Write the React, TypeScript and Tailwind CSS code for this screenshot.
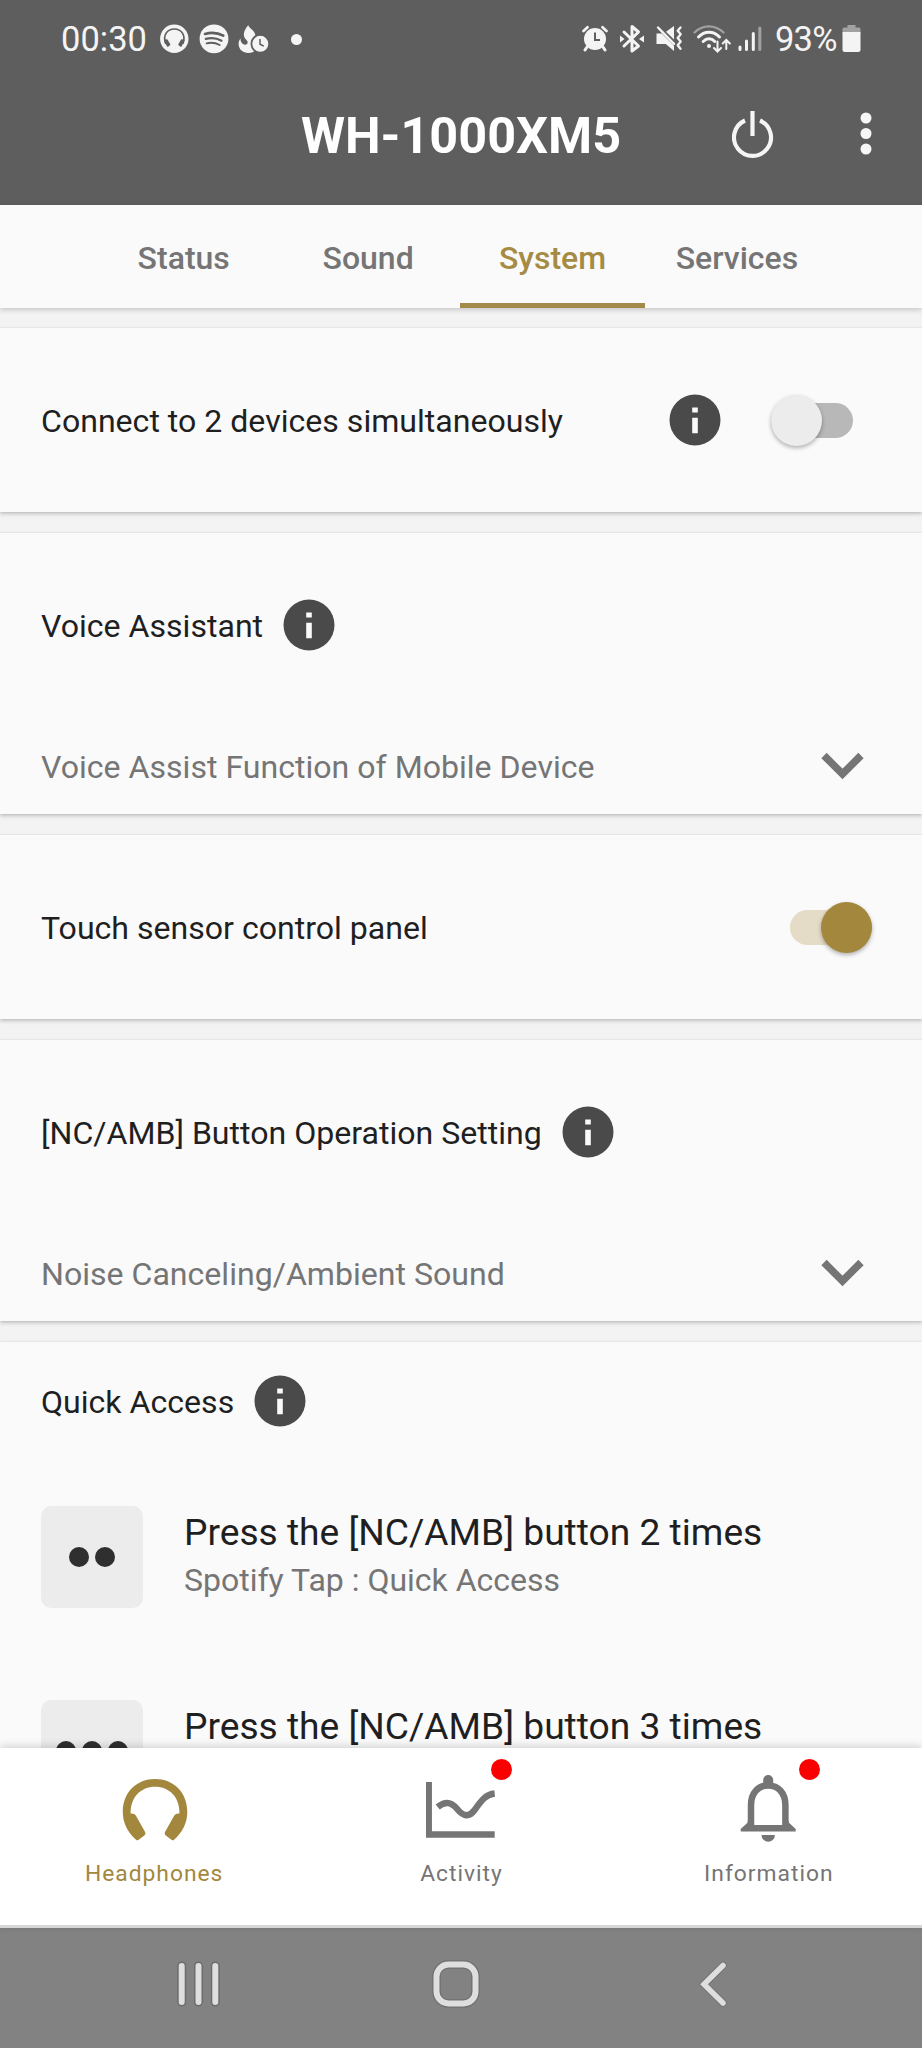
import React from 'react';
import clsx from 'clsx';

const InfoIcon = () => (
    <svg className="h-[52px] w-[52px] shrink-0" viewBox="0 0 52 52">
        <circle cx="26" cy="26" r="25.5" fill="#4a4a4a" />
        <path d="M23.2 13.4h5.6v5.2h-5.6zM23.2 23.8h5.6v15.4h-5.6z" fill="#fafafa" />
    </svg>
);

const ChevronIcon = () => (
    <svg className="h-[28px] w-[44px]" viewBox="0 0 44 28">
        <path d="M3 3.5 21.5 22 40 3.5" fill="none" stroke="#757575" strokeWidth="7.5" />
    </svg>
);

const Switch = ({ on }: { on?: boolean }) => (
    <div
        className={clsx(
            'flex h-[35px] w-[82px] items-center rounded-full',
            on ? 'justify-end bg-[#e5dcc7]' : 'justify-start bg-[#b8b8b8]'
        )}
    >
        <div
            className={clsx(
                'h-[51px] w-[51px] shrink-0 rounded-full shadow-[0_2px_4px_rgba(0,0,0,0.3)]',
                on ? 'bg-[#a3873c]' : 'bg-[#ececec]'
            )}
        />
    </div>
);

const StatusBar = () => (
    <div className="flex h-[78px] items-center pl-[61px] text-[#f4f4f4]">
        <span className="w-[98px] text-[34.5px] leading-none">00:30</span>
        {/* Headphones connect */}
        <svg className="ml-px h-[30px] w-[29px]" viewBox="0 0 29 30">
            <circle cx="14.3" cy="14.8" r="14.2" fill="currentColor" />
            <path
                d="M5.8 20C2.3 11 7.4 5 14.3 5S26.3 11 22.8 20"
                fill="none" stroke="#5e5e5e" strokeWidth="1.7"
            />
            <path
                d="m5 16.500 1.800-.5 2.700 4.500-1.900 1.500zM23.600 16.500l-1.800-.5-2.700 4.500 1.900 1.500z"
                fill="#5e5e5e" stroke="#5e5e5e" strokeWidth="1.6" strokeLinejoin="round"
            />
        </svg>
        {/* Spotify */}
        <svg className="ml-[10px] h-[30px] w-[30px]" viewBox="0 0 30 30">
            <circle cx="15" cy="14.8" r="14.4" fill="currentColor" />
            <g fill="none" stroke="#5e5e5e" strokeLinecap="round">
                <path d="M6 9.900c6.300-1.700 13-1.100 18.300 1.800" strokeWidth="2.6" />
                <path d="M6.800 14.900c5.500-1.500 11-.9 15.700 1.800" strokeWidth="2.2" />
                <path d="M7.600 19.400c4.500-1.200 9-.6 13.100 1.600" strokeWidth="1.8" />
            </g>
        </svg>
        {/* Flame with timer */}
        <svg className="ml-[9px] h-[30px] w-[32px]" viewBox="0 0 32 30">
            <path
                d="M10.300 1.300c.6 3 5.800 5 6.800 8.700.6 2.400-.3 4.400-1.900 5.900-1.700 1.700-1.300 4.600-.2 7.100l2 3.800C15 28.500 13 29 10.500 29 5 29 .6 25.200.6 20c0-2.200.7-4 1.900-5.400-.1 2.700 1 4.700 2.900 5.700 2.200 1.100 4.500-.1 4.300-2.200-.2-1.700-2.400-2.800-3.300-4.900C4.900 9.600 7.100 4.500 10.300 1.300z"
                fill="currentColor"
            />
            <circle cx="22.3" cy="19.8" r="8.9" fill="currentColor" stroke="#5e5e5e" strokeWidth="1.8" />
            <path d="M22 15v5.200l3.800 2" fill="none" stroke="#5e5e5e" strokeWidth="1.5" />
        </svg>
        <span className="ml-[21px] h-[11px] w-[11px] rounded-full bg-[#f4f4f4]" />

        <div className="ml-auto flex items-center pr-[61px]">
            {/* Alarm */}
            <svg className="h-[30px] w-[26px]" viewBox="0 0 26 30">
                <g stroke="currentColor" strokeLinecap="round">
                    <path d="m1.500 7 4-3.800M24.500 7l-4-3.800" strokeWidth="2.6" />
                    <path d="m5 23-2 3M21 23l2 3" strokeWidth="3" />
                </g>
                <circle cx="13" cy="15" r="11" fill="currentColor" />
                <path d="M13 8.500V16h5" fill="none" stroke="#5e5e5e" strokeWidth="2" />
            </svg>
            {/* Bluetooth */}
            <svg className="ml-[12px] h-[30px] w-[24px]" viewBox="0 0 24 30">
                <path
                    d="m4 8 14.500 14-6.500 5V2.500L18.500 8 4 22"
                    fill="none" stroke="currentColor" strokeWidth="3" strokeLinejoin="round" strokeLinecap="round"
                />
                <path d="M0 11.500 4.500 15 0 18.500zM24 11.500 19 15l5 3.500z" fill="currentColor" />
            </svg>
            {/* Muted, vibrate */}
            <svg className="ml-[12px] h-[30px] w-[27px]" viewBox="0 0 27 30">
                <path d="M.5 9.500h5.300L18 21.800V27l-8.200-7H.5zM10 7.700 18 2v13.500z" fill="currentColor" />
                <path d="m2 3.500 16 16.300" stroke="currentColor" strokeWidth="2.4" strokeLinecap="round" />
                <path
                    d="m24.500 3.500-2.800 3.300 3 3.500-3 3.700 3 3.500-3 3.700 2.800 3.600"
                    fill="none" stroke="currentColor" strokeWidth="2.3" strokeLinecap="round" strokeLinejoin="round"
                />
            </svg>
            {/* Wifi with data arrows */}
            <svg className="ml-[10px] h-[30px] w-[38px]" viewBox="0 0 38 30">
                <g fill="none" stroke="currentColor" strokeLinecap="round">
                    <path d="M1.500 8.500c8-8.300 20.500-8.300 29 0" strokeWidth="2.3" opacity=".45" />
                    <path d="M5.500 13c6-6.300 15-6.300 21 0" strokeWidth="3" />
                    <path d="M10.200 17.500c3.500-3.700 8.100-3.700 11.600 0" strokeWidth="3" />
                    <path d="M24.500 17.500v9.500m-3.500-3 3.500 3.600L28 24M33.300 25v-8.500m-3.500 3 3.500-3.600 3.500 3.600" strokeWidth="2" />
                </g>
                <circle cx="16" cy="22" r="2" fill="currentColor" />
            </svg>
            {/* Signal */}
            <svg className="ml-[7px] h-[30px] w-[24px]" viewBox="0 0 24 30">
                <g stroke="currentColor" strokeWidth="3" strokeLinecap="round">
                    <path d="M2 23v2.500M8.500 17v8.500M15.300 9.500v16" />
                    <path d="M21.800 4v21.500" opacity=".45" />
                </g>
            </svg>
            <span className="ml-[13px] w-[63px] text-[34.5px] leading-none tracking-[-0.8px]">93%</span>
            {/* Battery */}
            <svg className="ml-[4px] h-[30px] w-[19px]" viewBox="0 0 19 30">
                <path d="M5.500 1h8v2.500H17Q18.500 3.500 18.500 5v4H.5V5Q.5 3.500 2 3.500h3.500z" fill="currentColor" opacity=".45" />
                <path d="M.5 8h18v17.500q0 2.500-2.500 2.500H3Q.5 28 .5 25.500z" fill="currentColor" />
            </svg>
        </div>
    </div>
);

const AppBar = () => (
    <div className="grid h-[116px] grid-cols-[1fr_auto_1fr] items-center">
        <h1 className="col-start-2 pt-px text-[50.4px] leading-none font-bold text-white">WH-1000XM5</h1>
        <div className="flex items-center justify-end gap-[86px] pr-[50px]">
            <svg className="h-[50px] w-[42px]" viewBox="0 0 42 50">
                <path d="M13 9.500a18.500 18.500 0 1 0 15 0M20.500 0v25" fill="none" stroke="#f5f5f5" strokeWidth="4.2" />
            </svg>
            <svg className="h-[48px] w-[12px]" viewBox="0 0 12 48" fill="#f7f7f7">
                <circle cx="6" cy="6" r="5.5" />
                <circle cx="6" cy="21.5" r="5.5" />
                <circle cx="6" cy="37" r="5.5" />
            </svg>
        </div>
    </div>
);

const tabs = ['Status', 'Sound', 'System', 'Services'];

const TabBar = ({ active }: { active: string }) => (
    <nav className="relative z-10 flex h-[103px] shrink-0 bg-[#fafafa] pl-[91.5px] shadow-[0_2px_5px_rgba(0,0,0,0.18)]">
        {tabs.map((tab) => (
            <div
                key={tab}
                className={clsx(
                    'flex w-[184.4px] items-center justify-center border-b-[5px] pt-[7px] text-[32px] font-medium',
                    tab === active ? 'border-[#a38a48] text-[#a58b43]' : 'border-transparent text-[#757575]'
                )}
            >
                {tab}
            </div>
        ))}
    </nav>
);

const Card = ({ children }: { children: React.ReactNode }) => (
    <section className="shrink-0 bg-[#fafafa] px-[41px] text-[32.1px] text-[#1f1f1f] shadow-[0_2px_4px_rgba(0,0,0,0.2),0_0_2px_rgba(0,0,0,0.1)]">
        {children}
    </section>
);

const SelectCard = ({ title, value }: { title: string; value: string }) => (
    <Card>
        <div className="flex h-[184px] items-center gap-[20px]">
            <span className="pt-[2px]">{title}</span>
            <InfoIcon />
        </div>
        <div className="flex h-[97px] items-center justify-between pr-[16px] text-[#757575]">
            <span className="pt-[3px]">{value}</span>
            <ChevronIcon />
        </div>
    </Card>
);

const QuickAccessRow = ({ presses, value }: { presses: number; value?: string }) => (
    <div className="flex h-[194px] items-center gap-[41px]">
        <div className="flex h-[102px] w-[102px] items-center justify-center gap-[5.5px] rounded-[10px] bg-[#ececec]">
            {Array.from({ length: presses }).map((_, i) => (
                <span key={i} className="h-[20.5px] w-[20.5px] rounded-full bg-[#2f2f2f]" />
            ))}
        </div>
        <div className="pb-[4px]">
            <p className="text-[37.17px] leading-[50px]">Press the [NC/AMB] button {presses} times</p>
            <p className="h-[44px] text-[32px] leading-[44px] text-[#757575]">{value}</p>
        </div>
    </div>
);

const HeadphonesIcon = () => (
    <svg className="h-[68px] w-[70px]" viewBox="-0.8 0 70 68" fill="#a3873c">
        <path d="M16.500 66C7.500 58 3 48.500 3 38 3 18 17 5 35.300 5S67.500 18 67.500 38c0 10.500-4.500 20-13.500 28q-1 .5-2 0L46 61.500q-2-1.500-.8-3.500L54.500 41.500q1.500-2.500 5.200-2C60 23 49.500 12.700 35.300 12.700S10.600 23 10.800 39.500q3.700-.5 5.200 2L25.300 58q1.200 2-.8 3.500l-6 4.500q-1 .5-2 0z" />
    </svg>
);

const ActivityIcon = () => (
    <svg className="h-[68px] w-[70px]" viewBox="0.8 0 70 68" fill="none" stroke="#757575">
        <path d="M3.500 8v52.500H69.500" strokeWidth="6.5" />
        <path d="M12.500 33c8-6.500 14-4.500 19.500 2 5 6 11 9.500 17 1.500C56 27 60 20.500 69.500 19.500" strokeWidth="6.5" />
    </svg>
);

const BellIcon = () => (
    <svg className="h-[68px] w-[70px]" viewBox="0.8 0 70 68">
        <path d="M17.800 51V31C17.800 19 25 11.500 35 11.500S52.200 19 52.200 31v20" fill="none" stroke="#757575" strokeWidth="6.5" />
        <path
            d="M30 10V6a5 5 0 0 1 10 0v4zM14.500 46.500v2l-7 6.500v2.500h55v-2.500l-7-6.500v-2l-3 4.500h-35zM28.300 61h13.400a6.700 6.700 0 0 1-13.400 0z"
            fill="#757575"
        />
    </svg>
);

const navItems = [
    { label: 'Headphones', icon: HeadphonesIcon, active: true, badge: false },
    { label: 'Activity', icon: ActivityIcon, active: false, badge: true },
    { label: 'Information', icon: BellIcon, active: false, badge: true },
];

const BottomNav = () => (
    <nav className="relative z-10 grid h-[180px] shrink-0 grid-cols-3 border-b-[3px] border-[#d6d6d6] bg-white shadow-[0_-2px_8px_rgba(0,0,0,0.16)]">
        {navItems.map(({ label, icon: Icon, active, badge }) => (
            <div key={label} className="flex flex-col items-center pt-[26px] pl-[1px]">
                <div className="relative">
                    <Icon />
                    {badge && <span className="absolute -top-[15.5px] left-[65px] h-[21px] w-[21px] rounded-full bg-[#fb0000]" />}
                </div>
                <span className={clsx('mt-[16px] text-[22.8px] leading-[32px] tracking-[1px]', active ? 'text-[#a3873c]' : 'text-[#757575]')}>
                    {label}
                </span>
            </div>
        ))}
    </nav>
);

const SystemNav = () => (
    <div className="flex h-[120px] shrink-0 items-center bg-[#828282] pb-[8px] pl-[175px]">
        {/* Recents */}
        <svg className="h-[50px] w-[47px]" viewBox="0 0 47 50" fill="none" strokeLinecap="round">
            <path d="M6.700 7v36M23.500 7v36M40.300 7v36" stroke="#6c6c6c" strokeWidth="9" />
            <path d="M6.700 7v36M23.500 7v36M40.300 7v36" stroke="#dedede" strokeWidth="6" />
        </svg>
        {/* Home */}
        <svg className="ml-[209px] h-[50px] w-[50px]" viewBox="0 0 50 50" fill="none">
            <rect x="5.5" y="5.5" width="39" height="39" rx="12" stroke="#707070" strokeWidth="8.5" />
            <rect x="5.5" y="5.5" width="39" height="39" rx="12" stroke="#dedede" strokeWidth="6" />
        </svg>
        {/* Back */}
        <svg className="ml-[216px] h-[50px] w-[34px]" viewBox="0 0 34 50" fill="none" strokeLinecap="round">
            <path d="M26 6.500 7 25.300 26 44" stroke="#747474" strokeWidth="7.5" />
            <path d="M26 6.500 7 25.300 26 44" stroke="#dedede" strokeWidth="5.5" />
        </svg>
    </div>
);

export default function App() {
    return (
        <div className="flex h-[2048px] w-[922px] flex-col overflow-hidden bg-[#f3f3f3] font-['Roboto',sans-serif]">
            <header className="h-[205px] shrink-0 bg-[#5e5e5e]">
                <StatusBar />
                <AppBar />
            </header>
            <TabBar active="System" />

            <main className="flex min-h-0 flex-1 flex-col gap-[21px] overflow-hidden pt-[20px]">
                <Card>
                    <div className="flex h-[184px] items-center pr-[28px]">
                        <span className="flex-1 pt-[3px]">Connect to 2 devices simultaneously</span>
                        <InfoIcon />
                        <div className="ml-[50px]">
                            <Switch />
                        </div>
                    </div>
                </Card>

                <SelectCard title="Voice Assistant" value="Voice Assist Function of Mobile Device" />

                <Card>
                    <div className="flex h-[184px] items-center justify-between pr-[9px]">
                        <span className="pt-[3px]">Touch sensor control panel</span>
                        <Switch on />
                    </div>
                </Card>

                <SelectCard title="[NC/AMB] Button Operation Setting" value="Noise Canceling/Ambient Sound" />

                <Card>
                    <div className="flex h-[118px] items-center gap-[20px]">
                        <span className="pt-[2px]">Quick Access</span>
                        <InfoIcon />
                    </div>
                    <QuickAccessRow presses={2} value="Spotify Tap : Quick Access" />
                    <QuickAccessRow presses={3} />
                </Card>
            </main>

            <BottomNav />
            <SystemNav />
        </div>
    );
}
